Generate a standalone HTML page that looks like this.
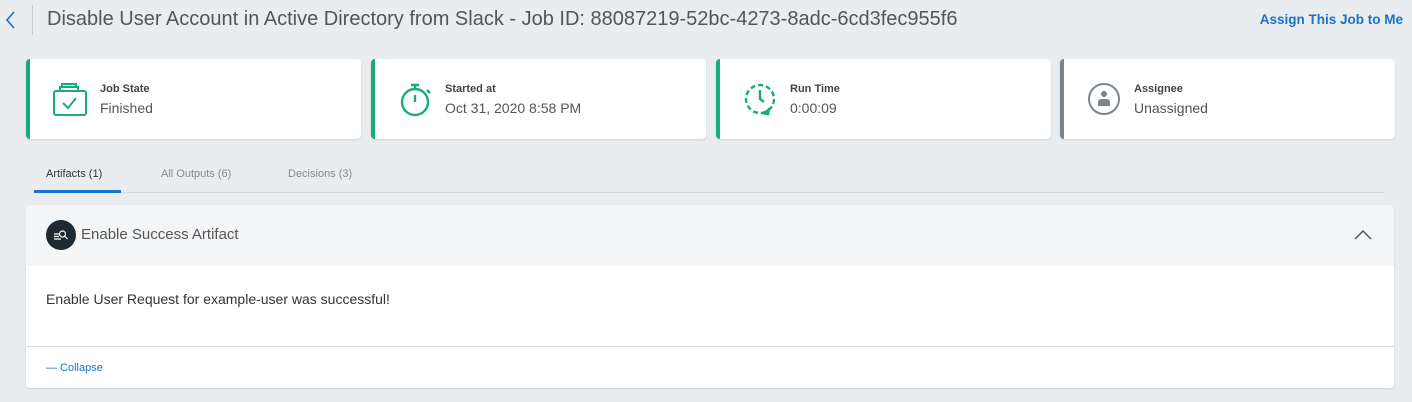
<!DOCTYPE html><html><head><style>
body{margin:0;width:1412px;height:402px;background:#e9edf0;font-family:"Liberation Sans",sans-serif;position:relative;overflow:hidden;color:#333}
.a{position:absolute}
.card{position:absolute;top:59px;height:80px;width:335px;background:#fff;border-radius:4px;border-left:4px solid #17ad78;box-sizing:border-box;box-shadow:0 1px 2px rgba(0,0,0,.12)}
.card .l{position:absolute;left:70px;top:24px;font-size:11px;font-weight:bold;color:#444}
.card .v{position:absolute;left:70px;top:41px;font-size:14px;color:#555}
.card svg{position:absolute;left:22px;top:22px}
</style></head><body>
<svg class="a" style="left:6px;top:11px" width="10" height="18" viewBox="0 0 10 18" fill="none" stroke="#1a73c8" stroke-width="1.6"><path d="M8 1L1 9l7 8"/></svg>
<div class="a" style="left:32px;top:5px;width:1px;height:30px;background:#ccc"></div>
<div class="a" style="left:47px;top:8px;font-size:20px;color:#555">Disable User Account in Active Directory from Slack - Job ID: 88087219-52bc-4273-8adc-6cd3fec955f6</div>
<div class="a" style="right:9px;top:12px;font-size:13.5px;font-weight:bold;color:#1a73c8">Assign This Job to Me</div>

<div class="card" style="left:26px"><svg width="36" height="36" viewBox="0 0 36 36" fill="none" stroke="#17ad78" stroke-width="2"><rect x="2" y="10" width="32" height="24" rx="2"/><path d="M8 10V6h18v4M10 6V3h14v3"/><path d="M11 22l5 5 8-10"/></svg><div class="l">Job State</div><div class="v">Finished</div></div>
<div class="card" style="left:371px"><svg width="36" height="36" viewBox="0 0 36 36" fill="none" stroke="#17ad78" stroke-width="2.4"><circle cx="18" cy="21" r="13"/><path d="M14 4h8M18 8V4M18 21v-7M30 9l3 3"/></svg><div class="l">Started at</div><div class="v">Oct 31, 2020 8:58 PM</div></div>
<div class="card" style="left:716px"><svg width="36" height="36" viewBox="0 0 36 36" fill="none" stroke="#17ad78" stroke-width="2.4"><circle cx="18" cy="18" r="14" stroke-dasharray="5 3"/><path d="M18 9v9l4 3"/><path d="M20 32l6 1 1-6" fill="#17ad78"/></svg><div class="l">Run Time</div><div class="v">0:00:09</div></div>
<div class="card" style="left:1060px;border-left-color:#7a8590"><svg width="36" height="36" viewBox="0 0 36 36"><circle cx="18" cy="18" r="15" fill="none" stroke="#7a8590" stroke-width="2"/><circle cx="18" cy="13" r="3" fill="#7a8590"/><path d="M12 25v-4a3 3 0 0 1 3-3h6a3 3 0 0 1 3 3v4z" fill="#7a8590"/></svg><div class="l">Assignee</div><div class="v">Unassigned</div></div>

<div class="a" style="left:46px;top:168px;font-size:11px;color:#333">Artifacts (1)</div>
<div class="a" style="left:161px;top:168px;font-size:11px;color:#888">All Outputs (6)</div>
<div class="a" style="left:288px;top:168px;font-size:11px;color:#888">Decisions (3)</div>
<div class="a" style="left:34px;top:192px;width:1350px;height:1px;background:#cfd6dc"></div>
<div class="a" style="left:34px;top:190px;width:87px;height:3px;background:#1a73c8"></div>

<div class="a" style="left:26px;top:205px;width:1368px;height:183px;background:#fff;border-radius:4px;box-shadow:0 1px 2px rgba(0,0,0,.12);overflow:hidden">
<div class="a" style="left:0;top:0;width:100%;height:61px;background:#f4f5f7"></div>
<div class="a" style="left:20px;top:15px;width:30px;height:30px;border-radius:50%;background:#1e2a33"></div>
<svg class="a" style="left:27px;top:22px" width="16" height="16" viewBox="0 0 16 16" fill="none" stroke="#fff" stroke-width="1.2"><path d="M1 7h5M1 9.5h5M1 12h7"/><circle cx="9.5" cy="7" r="3"/><path d="M11.5 9l3 3"/></svg>
<div class="a" style="left:55px;top:21px;font-size:15px;color:#555">Enable Success Artifact</div>
<svg class="a" style="left:1328px;top:24px" width="18" height="12" viewBox="0 0 18 12" fill="none" stroke="#555" stroke-width="1.5"><path d="M1 10l8-8 8 8"/></svg>
<div class="a" style="left:20px;top:86px;font-size:14px;color:#333">Enable User Request for example-user was successful!</div>
<div class="a" style="left:0;top:141px;width:100%;height:1px;background:#ddd"></div>
<div class="a" style="left:20px;top:157px;font-size:11px;color:#1a73c8">— Collapse</div>
</div>
</body></html>
